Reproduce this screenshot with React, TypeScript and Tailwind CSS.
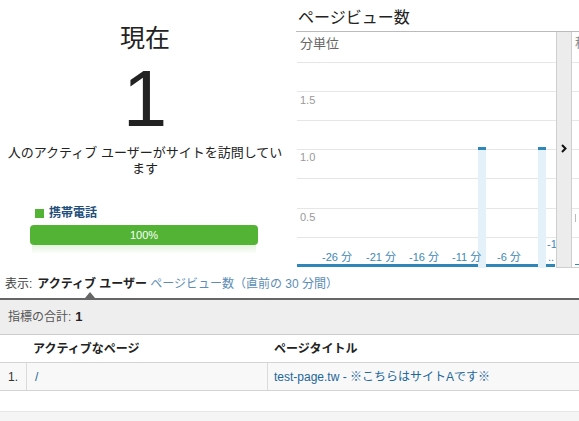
import type { ReactNode } from 'react'

const gridYs = [30, 59, 88, 117, 146, 176, 205]

const xLabels = [
  { x: 26, t: '-26 分' },
  { x: 70, t: '-21 分' },
  { x: 113, t: '-16 分' },
  { x: 156, t: '-11 分' },
  { x: 201, t: '-6 分' },
]

const bars = [182, 242]

function PageviewPlot() {
  return (
    <svg width="260" height="236" viewBox="0 0 260 236" className="block shrink-0">
      {gridYs.map((y) => (
        <line key={y} x1="1" x2="260" y1={y + 0.5} y2={y + 0.5} stroke="#e6e6e6" strokeWidth="1" />
      ))}
      <text x="4" y="16" fontSize="13" fill="#666">
        分単位
      </text>
      <text x="4" y="72" fontSize="11" fill="#999">
        1.5
      </text>
      <text x="4" y="129" fontSize="11" fill="#999">
        1.0
      </text>
      <text x="4" y="189" fontSize="11" fill="#999">
        0.5
      </text>
      <rect x="1" y="232" width="258" height="3" fill="#2f86b9" />
      {bars.map((x) => (
        <g key={x}>
          <rect x={x} y="115" width="8" height="121" fill="#e4f1f9" />
          <rect x={x} y="115" width="8" height="3" fill="#2f86b9" />
        </g>
      ))}
      {xLabels.map((l) => (
        <text key={l.x} x={l.x} y="229" fontSize="11" fill="#3d87b5">
          {l.t}
        </text>
      ))}
      <text x="251" y="216" fontSize="11" fill="#3d87b5">
        -1
      </text>
      <text x="252" y="229" fontSize="11" fill="#3d87b5">
        ..
      </text>
    </svg>
  )
}

function Cell({ className = '', children }: { className?: string; children?: ReactNode }) {
  return <div className={`flex h-full items-center ${className}`}>{children}</div>
}

export default function App() {
  return (
    <div className="relative h-[421px] w-[579px] overflow-hidden bg-white font-['Liberation_Sans','Noto_Sans_CJK_JP',sans-serif] text-[#333]">
      <div className="flex h-[268px]">
        {/* current active users */}
        <div className="flex w-[290px] flex-col items-center pt-[24px]">
          <div className="text-[25px] leading-[28px] text-[#222]">現在</div>
          <div className="mt-[7px] text-[80px] leading-[80px] text-[#222]">1</div>
          <p className="mt-[6px] text-center text-[13px] leading-[16px] text-[#222]">
            人のアクティブ ユーザーがサイトを訪問してい
            <br />
            ます
          </p>
          <div className="mt-[29px] flex items-center gap-[5px] self-start pl-[35px] text-[12px] leading-[14px]">
            <span className="h-[9px] w-[9px] bg-[#52b335]" />
            <span className="font-bold text-[#1f4f7a]">携帯電話</span>
          </div>
          <div className="mt-[5px] flex h-[20px] w-[228px] items-center justify-center self-start ml-[30px] rounded-[4px] bg-[#52b335] text-[11px] text-white">
            100%
          </div>
          <div className="ml-[32px] h-[9px] w-[224px] self-start bg-gradient-to-b from-[#e3f2dc] to-white" />
        </div>

        {/* pageviews chart */}
        <div className="flex w-[289px] flex-col pl-[6px]">
          <div className="pl-[2px] pt-[8px] text-[16px] leading-[20px] text-[#222]">ページビュー数</div>
          <div className="mt-[3px] flex border-t border-[#bbb]">
            <PageviewPlot />
            <div className="relative h-[236px] w-[16px] shrink-0 border-x border-b border-[#cfcfcf] bg-[#ececec]">
              <svg width="6" height="9" viewBox="0 0 6 9" className="absolute left-[4px] top-[112px]">
                <path d="M1 1 L4.5 4.5 L1 8" fill="none" stroke="#111" strokeWidth="2" />
              </svg>
            </div>
            <div className="h-[236px] flex-1 overflow-hidden border-b border-[#cfcfcf]">
              <svg width="7" height="235" viewBox="0 0 7 235" className="block">
                {gridYs.map((y) => (
                  <line key={y} x1="0" x2="7" y1={y + 0.5} y2={y + 0.5} stroke="#e6e6e6" />
                ))}
                <text x="3" y="15" fontSize="13" fill="#888">
                  秒
                </text>
                <line x1="3.5" x2="3.5" y1="182" y2="190" stroke="#bbb" />
                <rect x="3" y="232" width="4" height="1" fill="#3d87b5" />
              </svg>
            </div>
          </div>
        </div>
      </div>

      {/* view switcher */}
      <div className="relative flex h-[30px] items-start pl-[5px] pt-[8px] text-[12px] leading-[16px]">
        <span className="text-[#444]">表示:</span>
        <span className="ml-[5px] font-bold text-[#222]">アクティブ ユーザー</span>
        <span className="ml-[3px] text-[#5b8db5]">ページビュー数（直前の 30 分間）</span>
        <span className="absolute bottom-0 left-[85px] h-0 w-0 border-x-[5px] border-b-[6px] border-x-transparent border-b-[#666]" />
      </div>
      <div className="h-[2px] bg-[#666]" />

      {/* totals */}
      <div className="flex h-[35px] items-center border-b border-[#ccc] bg-[#eeeeee] pl-[8px] text-[12px] text-[#555]">
        指標の合計:<span className="ml-[4px] text-[13px] font-bold text-[#222]">1</span>
      </div>

      {/* table */}
      <div className="flex h-[28px] border-b border-[#d4d4d4] text-[12px] font-bold text-[#222]">
        <Cell className="w-[27px]" />
        <Cell className="w-[241px] pl-[6px]">アクティブなページ</Cell>
        <Cell className="flex-1 pl-[6px]">ページタイトル</Cell>
      </div>
      <div className="flex h-[28px] border-b border-[#d4d4d4] bg-[#f8f8f8] text-[12px]">
        <Cell className="w-[27px] border-r border-[#dadada] pl-[8px] text-[#333]">1.</Cell>
        <Cell className="w-[241px] border-r border-[#dadada] pl-[8px] text-[#22679a]">/</Cell>
        <Cell className="flex-1 pl-[6px] text-[#22679a]">test-page.tw - ※こちらはサイトAです※</Cell>
      </div>

      <div className="absolute bottom-0 left-0 h-[10px] w-full border-t border-[#e8e8e8] bg-[#f5f5f5]" />
    </div>
  )
}
